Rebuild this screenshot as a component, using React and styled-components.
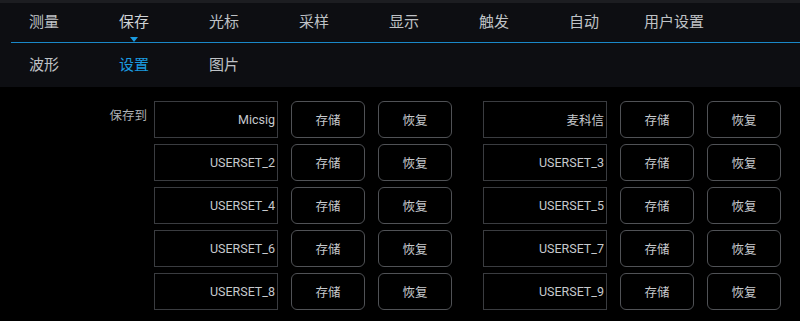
import React from 'react';
import styled, { createGlobalStyle } from 'styled-components';

const GlobalStyle = createGlobalStyle`
  html, body {
    margin: 0;
    padding: 0;
    background: #000;
  }
  body {
    font-family: Roboto, "Noto Sans CJK SC", sans-serif;
  }
`;

const Page = styled.div`
  width: 800px;
  height: 321px;
  overflow: hidden;
  background: #000;
`;

const TopStrip = styled.div`
  height: 3px;
  background: #1c1d21;
`;

const Header = styled.div`
  background: #0d0e12;
`;

const MainNav = styled.div`
  display: flex;
  height: 39px;
  margin-left: -1px;
`;

const Tab = styled.div`
  position: relative;
  width: 90px;
  flex: none;
  text-align: center;
  line-height: 39px;
  font-size: 15px;
  color: ${(p) => (p.$active ? '#d0d3d6' : '#bfc2c6')};
`;

const Marker = styled.span`
  position: absolute;
  left: 50%;
  bottom: 0;
  margin-left: -4px;
  width: 0;
  height: 0;
  border-left: 4px solid transparent;
  border-right: 4px solid transparent;
  border-top: 5px solid #1a9be0;
`;

const Line = styled.div`
  height: 1px;
  margin-left: 11px;
  background: #1a88c8;
`;

const SubNav = styled.div`
  display: flex;
  height: 44px;
  margin-left: -1px;
`;

const SubTab = styled.div`
  width: 90px;
  flex: none;
  text-align: center;
  line-height: 44px;
  font-size: 15px;
  color: ${(p) => (p.$active ? '#1a9be0' : '#bfc2c6')};
`;

const Body = styled.div`
  display: flex;
  padding-top: 14px;
`;

const Label = styled.div`
  width: 147px;
  flex: none;
  text-align: right;
  padding-top: 8px;
  line-height: 14px;
  font-size: 12.5px;
  color: #aeb1b5;
`;

const Grid = styled.div`
  margin-left: 7px;
  display: grid;
  grid-template-columns: 124px 74px 74px 142px 74px 74px;
  grid-auto-rows: 37px;
  column-gap: 13px;
  row-gap: 6px;
`;

const NameBox = styled.div`
  box-sizing: border-box;
  border: 1px solid #3a3c40;
  display: flex;
  align-items: center;
  justify-content: flex-end;
  padding-right: 2px;
  font-size: 12.5px;
  color: #c6c9cd;
  margin-left: ${(p) => (p.$second ? '18px' : '0')};
`;

const Button = styled.div`
  box-sizing: border-box;
  border: 1px solid #505256;
  border-radius: 6px;
  display: flex;
  align-items: center;
  justify-content: center;
  font-size: 12.5px;
  color: #c6c9cd;
`;

const tabs = ['测量', '保存', '光标', '采样', '显示', '触发', '自动', '用户设置'];
const subTabs = ['波形', '设置', '图片'];
const rows = [
  ['Micsig', '麦科信'],
  ['USERSET_2', 'USERSET_3'],
  ['USERSET_4', 'USERSET_5'],
  ['USERSET_6', 'USERSET_7'],
  ['USERSET_8', 'USERSET_9'],
];

export default function App() {
  return (
    <Page>
      <GlobalStyle />
      <TopStrip />
      <Header>
        <MainNav>
          {tabs.map((t) => (
            <Tab key={t} $active={t === '保存'}>
              {t}
              {t === '保存' && <Marker />}
            </Tab>
          ))}
        </MainNav>
        <Line />
        <SubNav>
          {subTabs.map((t) => (
            <SubTab key={t} $active={t === '设置'}>{t}</SubTab>
          ))}
        </SubNav>
      </Header>
      <Body>
        <Label>保存到</Label>
        <Grid>
          {rows.map(([a, b]) => (
            <React.Fragment key={a}>
              <NameBox>{a}</NameBox>
              <Button>存储</Button>
              <Button>恢复</Button>
              <NameBox $second>{b}</NameBox>
              <Button>存储</Button>
              <Button>恢复</Button>
            </React.Fragment>
          ))}
        </Grid>
      </Body>
    </Page>
  );
}
